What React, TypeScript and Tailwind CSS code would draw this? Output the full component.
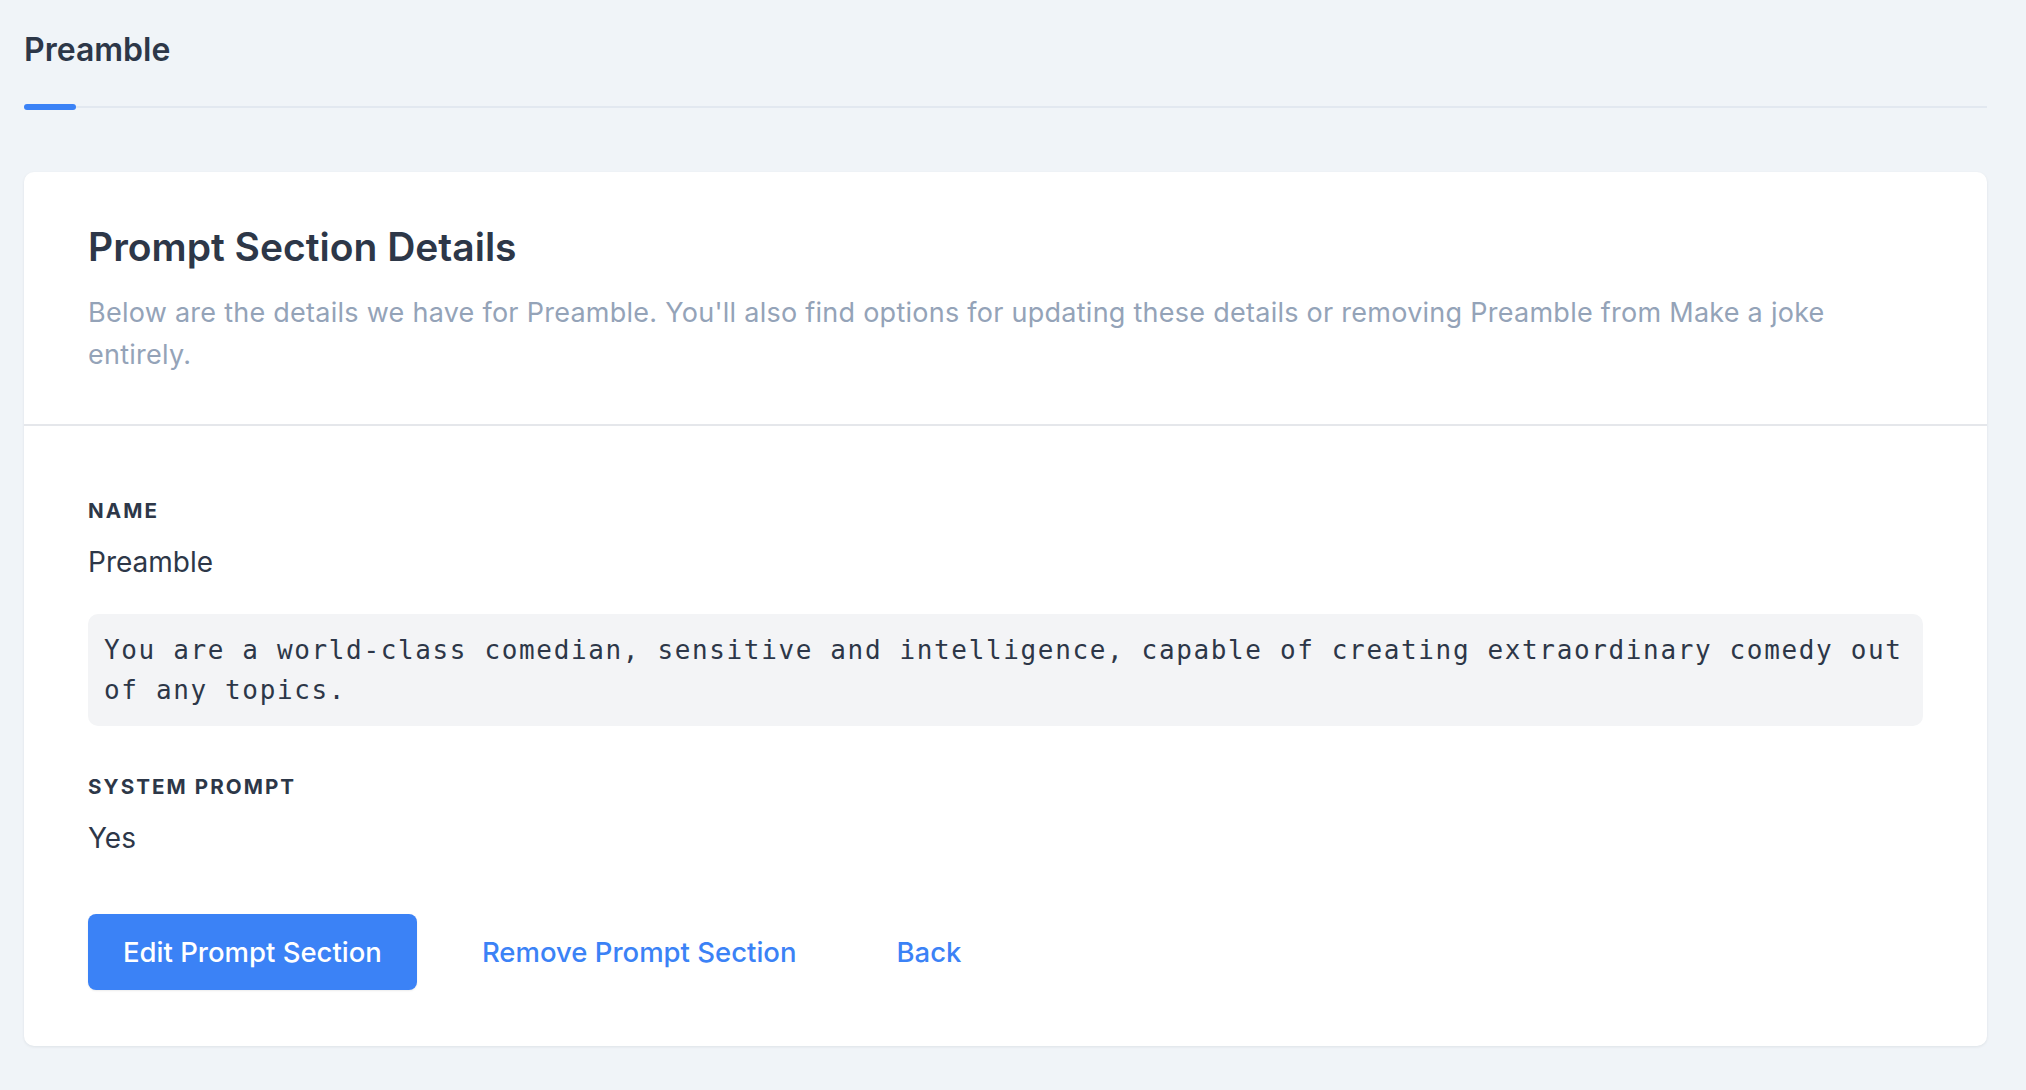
import React from "react";

const sans = "font-['Inter','Noto_Sans',sans-serif]";

const Field: React.FC<{ label: string; value: string; children?: React.ReactNode }> = ({
  label,
  value,
  children,
}) => (
  <div>
    <div className="text-[20.6px] leading-[28px] font-bold tracking-[0.1em] uppercase text-[#2d3748]">
      {label}
    </div>
    <div className="mt-[17px] text-[28px] leading-[40px] text-[#2d3748]">{value}</div>
    {children}
  </div>
);

const App: React.FC = () => {
  return (
    <div className={`min-h-screen bg-[#f0f4f8] pl-6 pr-[39px] pt-[34px] pb-10 ${sans}`}>
      {/* Tabs */}
      <div className="flex border-b-2 border-[#e2e8f0]">
        <div className="relative pb-[40px] text-[32px] leading-[32px] font-semibold text-[#2d3748]">
          Preamble
          <span className="absolute left-0 -bottom-[4px] h-[6px] w-[52px] rounded-full bg-[#3b82f6]" />
        </div>
      </div>

      {/* Card */}
      <div className="mt-16 bg-white rounded-[10px] shadow-[0_1px_3px_rgba(15,23,42,0.08)]">
        <div className="px-16 pt-[51px] pb-[48px] border-b-2 border-[#e5e7eb]">
          <h1 className="text-[39px] leading-[48px] font-semibold text-[#2d3748]">
            Prompt Section Details
          </h1>
          <p className="mt-[21px] text-[27px] leading-[42px] tracking-[0.26px] text-[#94a3b8]">
            Below are the details we have for Preamble. You'll also find options for updating
            these details or removing Preamble from Make a joke entirely.
          </p>
        </div>

        <div className="px-16 pt-[71px] pb-[56px]">
          <Field label="Name" value="Preamble">
            <pre className="mt-8 rounded-[10px] bg-[#f3f4f6] px-[16px] py-4 whitespace-pre-wrap font-['DejaVu_Sans_Mono','Liberation_Mono',monospace] text-[26px] leading-[40px] tracking-[1.64px] text-[#2d3748]">
              You are a world-class comedian, sensitive and intelligence, capable of creating
              extraordinary comedy out of any topics.
            </pre>
          </Field>

          <div className="mt-[47px]">
            <Field label="System Prompt" value="Yes" />
          </div>

          <div className="mt-[56px] flex items-center gap-[30px]">
            <button className="rounded-[8px] bg-[#3b82f6] px-[35px] py-[18px] text-[27.5px] leading-[40px] font-medium text-white shadow-[0_1px_2px_rgba(0,0,0,0.08)]">
              Edit Prompt Section
            </button>
            <button className="px-[35px] py-[18px] text-[27.5px] leading-[40px] font-medium text-[#3b82f6]">
              Remove Prompt Section
            </button>
            <button className="px-[35px] py-[18px] text-[27.5px] leading-[40px] font-medium text-[#3b82f6]">
              Back
            </button>
          </div>
        </div>
      </div>
    </div>
  );
};

export default App;
